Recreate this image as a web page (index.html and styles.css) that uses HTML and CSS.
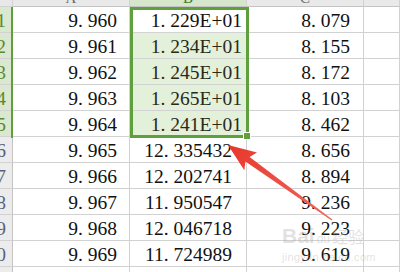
FILE: index.html
```html
<!DOCTYPE html>
<html>
<head>
<meta charset="utf-8">
<link rel="stylesheet" href="styles.css">
</head>
<body>
<div class="sheet">
  <div class="grid">
    <div class="corner"></div>
    <div class="ch"><span>A</span></div>
    <div class="ch ch-sel"><span>B</span></div>
    <div class="ch"><span>C</span></div>
    <div class="ch"><span></span></div>

    <div class="rh rh-sel"><span>11</span></div>
    <div class="c a">9<span class="p">.</span>960</div>
    <div class="c b active">1<span class="p">.</span>229E+01</div>
    <div class="c cc">8<span class="p">.</span>079</div>
    <div class="c"></div>

    <div class="rh rh-sel"><span>12</span></div>
    <div class="c a">9<span class="p">.</span>961</div>
    <div class="c b sel">1<span class="p">.</span>234E+01</div>
    <div class="c cc">8<span class="p">.</span>155</div>
    <div class="c"></div>

    <div class="rh rh-sel"><span>13</span></div>
    <div class="c a">9<span class="p">.</span>962</div>
    <div class="c b sel">1<span class="p">.</span>245E+01</div>
    <div class="c cc">8<span class="p">.</span>172</div>
    <div class="c"></div>

    <div class="rh rh-sel"><span>14</span></div>
    <div class="c a">9<span class="p">.</span>963</div>
    <div class="c b sel">1<span class="p">.</span>265E+01</div>
    <div class="c cc">8<span class="p">.</span>103</div>
    <div class="c"></div>

    <div class="rh rh-sel"><span>15</span></div>
    <div class="c a">9<span class="p">.</span>964</div>
    <div class="c b sel">1<span class="p">.</span>241E+01</div>
    <div class="c cc">8<span class="p">.</span>462</div>
    <div class="c"></div>

    <div class="rh"><span>16</span></div>
    <div class="c a">9<span class="p">.</span>965</div>
    <div class="c b2">12<span class="p">.</span>335432</div>
    <div class="c cc">8<span class="p">.</span>656</div>
    <div class="c"></div>

    <div class="rh"><span>17</span></div>
    <div class="c a">9<span class="p">.</span>966</div>
    <div class="c b2">12<span class="p">.</span>202741</div>
    <div class="c cc">8<span class="p">.</span>894</div>
    <div class="c"></div>

    <div class="rh"><span>18</span></div>
    <div class="c a">9<span class="p">.</span>967</div>
    <div class="c b2">11<span class="p">.</span>950547</div>
    <div class="c cc">9<span class="p">.</span>236</div>
    <div class="c"></div>

    <div class="rh"><span>19</span></div>
    <div class="c a">9<span class="p">.</span>968</div>
    <div class="c b2">12<span class="p">.</span>046718</div>
    <div class="c cc">9<span class="p">.</span>223</div>
    <div class="c"></div>

    <div class="rh"><span>20</span></div>
    <div class="c a">9<span class="p">.</span>969</div>
    <div class="c b2">11<span class="p">.</span>724989</div>
    <div class="c cc">9<span class="p">.</span>619</div>
    <div class="c"></div>

    <div class="rh"><span>21</span></div>
    <div class="c"></div>
    <div class="c"></div>
    <div class="c"></div>
    <div class="c"></div>
  </div>

  <div class="rh-bar"></div>
  <div class="selection"></div>
  <div class="handle"></div>

  <svg class="arrow" width="400" height="272" viewBox="0 0 400 272">
    <defs>
      <linearGradient id="ag" x1="228" y1="145" x2="332" y2="220" gradientUnits="userSpaceOnUse">
        <stop offset="0" stop-color="#e8372c"/>
        <stop offset="1" stop-color="#f06a5e"/>
      </linearGradient>
    </defs>
    <polygon fill="url(#ag)" points="228,145 257,152.5 249.6,157 332.4,219.5 331.6,220.5 245.4,161.6 244.3,170.3"/>
  </svg>

  <div class="wm">
    <div class="wm1"><span class="wm-bai">Bai</span><span class="wm-du">du</span><span class="wm-cn">经验</span></div>
    <div class="wm2">jingyan.baidu.com</div>
  </div>
</div>
</body>
</html>
```

FILE: styles.css
```css
html, body {
  margin: 0;
  padding: 0;
  background: #ffffff;
  overflow: hidden;
}

.sheet {
  position: relative;
  width: 400px;
  height: 272px;
  overflow: hidden;
}

.grid {
  display: grid;
  grid-template-columns: 13px 117px 117px 117px 36px;
  grid-template-rows: 7px repeat(11, 26px);
  font-family: "Liberation Serif", "Noto Sans CJK SC", serif;
  font-size: 19.5px;
  color: #111;
}

.grid > div {
  box-sizing: border-box;
  border-right: 1px solid #d2d2d2;
  border-bottom: 1px solid #d2d2d2;
  overflow: hidden;
}

.corner {
  background: #e8e8e8;
}

.ch {
  background: #e9e9e9;
  text-align: center;
  color: #666;
  font-size: 15px;
  border-bottom-color: #c4c4c4 !important;
}

.ch span {
  display: block;
  margin-top: -10px;
  line-height: 16px;
}

.ch-sel {
  background: #d6e6cb;
  color: #3f7a25;
}

.rh {
  background: #ececec;
  border-right-color: #c4c4c4 !important;
  display: flex;
  justify-content: flex-end;
  padding-right: 6px;
  padding-top: 2px;
  line-height: 24px;
  color: #56647a;
}

.rh span {
  white-space: nowrap;
}

.rh-sel {
  background: #dae8d0;
  color: #5a8a2c;
}

.c {
  text-align: right;
  white-space: nowrap;
  padding-top: 2px;
  line-height: 24px;
}

.p {
  letter-spacing: 0.25em;
}

.a {
  padding-right: 12px;
}

.cc {
  padding-right: 13px;
}

.b {
  padding-right: 4px;
}

.b2 {
  padding-right: 14px;
}

.sel {
  background: #e3f0da;
  color: #2a2a1a;
}

.active {
  background: #ffffff;
}

.rh-bar {
  position: absolute;
  left: 11px;
  top: 7px;
  width: 2px;
  height: 131px;
  background: #5f9f3c;
}

.selection {
  position: absolute;
  left: 130px;
  top: 7px;
  width: 119px;
  height: 131px;
  box-sizing: border-box;
  border: 3px solid #5f9f3c;
}

.handle {
  position: absolute;
  left: 244px;
  top: 133px;
  width: 6px;
  height: 6px;
  background: #5f9f3c;
  box-shadow: 0 0 0 1px #ffffff;
}

.arrow {
  position: absolute;
  left: 0;
  top: 0;
}

.wm {
  position: absolute;
  left: 282px;
  top: 225px;
  color: rgba(170, 170, 170, 0.35);
  font-family: "Liberation Sans", "Noto Sans CJK SC", sans-serif;
}

.wm1 {
  display: flex;
  align-items: baseline;
  line-height: 22px;
}

.wm-bai {
  font-size: 21px;
  font-weight: bold;
}

.wm-du {
  font-size: 12px;
  margin: 0 2px;
}

.wm-cn {
  font-family: "Noto Sans CJK SC", sans-serif;
  font-size: 16px;
}

.wm2 {
  font-size: 11px;
  line-height: 12px;
  margin-top: 1px;
  letter-spacing: 0.3px;
}
```
